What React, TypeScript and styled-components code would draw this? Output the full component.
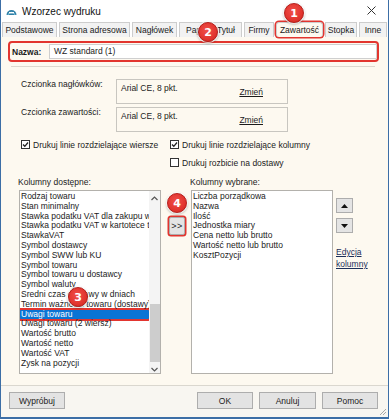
import styled, { createGlobalStyle } from "styled-components";

const GlobalStyle = createGlobalStyle`
  html, body {
    margin: 0;
    padding: 0;
    background: #ffffff;
  }
  body {
    font-family: "Liberation Sans", Arial, sans-serif;
    font-size: 8.5px;
    color: #1b1b1b;
  }
`;

const Window = styled.div`
  position: relative;
  width: 389px;
  height: 419px;
  box-sizing: border-box;
  display: flex;
  flex-direction: column;
  background: #fdf9f0;
  border-left: 1px solid #3c6ea6;
  border-right: 1px solid #3c6ea6;
  border-bottom: 2px solid #3c6ea6;
  overflow: hidden;
`;

const TitleBar = styled.div`
  height: 21px;
  flex: none;
  display: flex;
  align-items: center;
  gap: 5px;
  padding-left: 5px;
  background: #ffffff;
`;

const Title = styled.span`
  flex: 1;
  font-size: 10px;
  color: #111;
  padding-top: 1px;
`;

const CloseBox = styled.div`
  width: 28px;
  display: flex;
  justify-content: center;
  margin-right: 3px;
`;

const TabRow = styled.div`
  height: 16px;
  flex: none;
  display: flex;
  gap: 2px;
  padding-left: 1px;
  background: #ffffff;
`;

const Tab = styled.div<{ $w: number; $active?: boolean }>`
  width: ${({ $w }) => $w}px;
  box-sizing: border-box;
  height: 15px;
  margin-top: 1px;
  border: 1px solid #cdcdcd;
  border-bottom: none;
  background: ${({ $active }) => ($active ? "#fdf9f0" : "#f2f2f2")};
  line-height: 14px;
  text-align: center;
  white-space: nowrap;
  overflow: hidden;
  ${({ $active }) =>
    $active &&
    `
    border-radius: 3px;
    box-shadow: 0 0 0 1.5px #e2352f;
  `}
`;

const NameRow = styled.div`
  margin: 4px 9px 0 7px;
  height: 21px;
  box-sizing: border-box;
  border: 2px solid #e2352f;
  border-radius: 4px;
  display: flex;
  align-items: center;
  padding: 0 0 0 2px;
  gap: 4px;
`;

const NameLabel = styled.span`
  width: 33px;
  font-weight: bold;
`;

const NameInput = styled.div`
  flex: 1;
  height: 15px;
  box-sizing: border-box;
  background: #ffffff;
  border: 1px solid #cfcfcf;
  padding-left: 4px;
  line-height: 13px;
`;

const Divider = styled.div`
  height: 1px;
  margin: 4px 13px 0 10px;
  background: #dcd8cf;
`;

const FontGrid = styled.div`
  display: grid;
  grid-template-columns: 95px 172px;
  row-gap: 3px;
  margin-top: 12px;
  padding-left: 20px;
`;

const FieldLabel = styled.span`
  line-height: 11px;
`;

const FontBox = styled.div`
  height: 25px;
  box-sizing: border-box;
  border: 1px solid #c8c6c0;
  display: grid;
  grid-template-columns: 1fr auto;
  padding-left: 4px;
`;

const FontValue = styled.span`
  padding-top: 3px;
  line-height: 11px;
`;

const LinkText = styled.span`
  align-self: center;
  margin-right: 24px;
  padding-top: 1px;
  text-decoration: underline;
  color: #1b1b1b;
`;

const CheckGrid = styled.div`
  display: grid;
  grid-template-columns: 149px 1fr;
  row-gap: 9px;
  margin-top: 8px;
  padding-left: 20px;
`;

const CheckItem = styled.label<{ $col?: number }>`
  grid-column: ${({ $col }) => $col ?? "auto"};
  display: flex;
  align-items: center;
  gap: 3px;
  height: 9px;
  white-space: nowrap;
`;

const Box = styled.span`
  width: 9px;
  height: 9px;
  box-sizing: border-box;
  border: 1px solid #333;
  background: #ffffff;
  display: flex;
  align-items: center;
  justify-content: center;
`;

const ListsHeader = styled.div`
  display: grid;
  grid-template-columns: 172px 1fr;
  margin-top: 10px;
  padding-left: 17px;
  line-height: 11px;
`;

const ListsGrid = styled.div`
  display: grid;
  grid-template-columns: 142px 30px 142px auto;
  height: 184px;
  margin-top: 2px;
  padding-left: 18px;
`;

const ListBox = styled.div<{ $scroll?: boolean }>`
  box-sizing: border-box;
  border: 1px solid #b3b1ac;
  background: #ffffff;
  display: grid;
  grid-template-columns: ${({ $scroll }) => ($scroll ? "1fr 11px" : "1fr")};
  overflow: hidden;
`;

const Items = styled.div`
  padding-top: 1px;
  min-width: 0;
`;

const Item = styled.div<{ $selected?: boolean }>`
  height: 9.8px;
  line-height: 9.8px;
  padding-left: 1px;
  white-space: nowrap;
  overflow: hidden;
  ${({ $selected }) =>
    $selected &&
    `
    background: #0a74d4;
    color: #ffffff;
    border-radius: 1px;
    box-shadow: 0 0 0 2px #e2352f;
  `}
`;

const ScrollBar = styled.div`
  display: flex;
  flex-direction: column;
  align-items: center;
  background: #f4f4f4;
`;

const ScrollArrow = styled.div`
  height: 14px;
  display: flex;
  align-items: center;
  justify-content: center;
`;

const ScrollThumb = styled.div`
  width: 10px;
  height: 58px;
  margin-top: 99px;
  background: #cdcdcd;
`;

const MidColumn = styled.div`
  padding: 27px 0 0 8px;
`;

const MoveButton = styled.div`
  width: 16px;
  height: 18px;
  box-sizing: border-box;
  border: 1px solid #adadad;
  background: #e4e4e4;
  border-radius: 2px;
  box-shadow: 0 0 0 1.5px #e2352f;
  display: flex;
  align-items: center;
  justify-content: center;
  font-size: 9px;
  letter-spacing: 0.5px;
`;

const SideColumn = styled.div`
  display: flex;
  flex-direction: column;
  align-items: flex-start;
  gap: 5px;
  padding: 8px 0 0 3px;
`;

const OrderButton = styled.div`
  width: 17px;
  height: 15px;
  box-sizing: border-box;
  border: 1px solid #adadad;
  background: #e4e4e4;
  display: flex;
  align-items: center;
  justify-content: center;
`;

const EditLink = styled.span`
  margin-top: 8px;
  line-height: 12px;
  text-decoration: underline;
  color: #1c2f5a;
`;

const Body = styled.div`
  flex: 1;
`;

const Footer = styled.div`
  position: relative;
  height: 32px;
  flex: none;
  box-sizing: border-box;
  border-top: 1px solid #dad7cf;
  background: #f8f6f1;
  display: flex;
  align-items: flex-start;
  padding: 6px 10px 0 8px;
`;

const ButtonGroup = styled.div`
  margin-left: auto;
  display: flex;
  gap: 6px;
`;

const DialogButton = styled.div<{ $w: number }>`
  width: ${({ $w }) => $w}px;
  height: 17px;
  box-sizing: border-box;
  border: 1px solid #adadad;
  background: #e3e3e3;
  display: flex;
  align-items: center;
  justify-content: center;
`;

const Grip = styled.svg`
  position: absolute;
  right: 1px;
  bottom: 1px;
`;

const Badge = styled.div<{ $x: number; $y: number }>`
  position: absolute;
  left: ${({ $x }) => $x}px;
  top: ${({ $y }) => $y}px;
  width: 20px;
  height: 20px;
  box-sizing: border-box;
  border-radius: 50%;
  border: 1px solid #b51d19;
  background: radial-gradient(circle at 45% 40%, #f0504a 0%, #e2352f 60%, #c92520 100%);
  box-shadow: 0 0 0 1px rgba(255, 255, 255, 0.7), 0 1px 3px rgba(0, 0, 0, 0.45);
  color: #ffffff;
  font-family: "DejaVu Sans", "Liberation Sans", sans-serif;
  font-weight: bold;
  font-size: 11px;
  display: flex;
  align-items: center;
  justify-content: center;
`;

const tabs = [
  { label: "Podstawowe", w: 55 },
  { label: "Strona adresowa", w: 71 },
  { label: "Nagłówek", w: 45 },
  { label: "Papier i Tytuł", w: 63 },
  { label: "Firmy", w: 30 },
  { label: "Zawartość", w: 47, active: true },
  { label: "Stopka", w: 32 },
  { label: "Inne", w: 28 },
];

const available = [
  "Rodzaj towaru",
  "Stan minimalny",
  "Stawka podatku VAT dla zakupu w",
  "Stawka podatku VAT w kartotece t",
  "StawkaVAT",
  "Symbol dostawcy",
  "Symbol SWW lub KU",
  "Symbol towaru",
  "Symbol towaru u dostawcy",
  "Symbol waluty",
  "Średni czas dostawy w dniach",
  "Termin ważności towaru (dostawy)",
  "Uwagi towaru",
  "Uwagi towaru (2 wiersz)",
  "Wartość brutto",
  "Wartość netto",
  "Wartość VAT",
  "Zysk na pozycji",
];

const chosen = [
  "Liczba porządkowa",
  "Nazwa",
  "Ilość",
  "Jednostka miary",
  "Cena netto lub brutto",
  "Wartość netto lub brutto",
  "KosztPozycji",
];

function CheckMark() {
  return (
    <svg width="7" height="7" viewBox="0 0 7 7">
      <path d="M1 3.5 L2.8 5.3 L6 1.5" fill="none" stroke="#222" strokeWidth="1.3" />
    </svg>
  );
}

function Check({ checked, label, col }: { checked?: boolean; label: string; col?: number }) {
  return (
    <CheckItem $col={col}>
      <Box>{checked && <CheckMark />}</Box>
      {label}
    </CheckItem>
  );
}

function AppIcon() {
  return (
    <svg width="11" height="10" viewBox="0 0 11 10">
      <path d="M0.5 9 A5 5 0 0 1 10.5 9 Z" fill="#2f7fa6" />
      <path d="M2 9 A3.6 3.6 0 0 1 9 9" fill="none" stroke="#7cc3df" strokeWidth="1" />
      <rect x="3" y="6" width="5" height="1.4" fill="#ffffff" />
    </svg>
  );
}

export default function App() {
  return (
    <>
      <GlobalStyle />
      <Window>
        <TitleBar>
          <AppIcon />
          <Title>Wzorzec wydruku</Title>
          <CloseBox>
            <svg width="9" height="9" viewBox="0 0 9 9">
              <path d="M0.5 0.5 L8.5 8.5 M8.5 0.5 L0.5 8.5" stroke="#333" strokeWidth="1" />
            </svg>
          </CloseBox>
        </TitleBar>

        <TabRow>
          {tabs.map((t) => (
            <Tab key={t.label} $w={t.w} $active={t.active}>
              {t.label}
            </Tab>
          ))}
        </TabRow>

        <Body>
          <NameRow>
            <NameLabel>Nazwa:</NameLabel>
            <NameInput>WZ standard (1)</NameInput>
          </NameRow>
          <Divider />

          <FontGrid>
            <FieldLabel>Czcionka nagłówków:</FieldLabel>
            <FontBox>
              <FontValue>Arial CE, 8 pkt.</FontValue>
              <LinkText>Zmień</LinkText>
            </FontBox>
            <FieldLabel>Czcionka zawartości:</FieldLabel>
            <FontBox>
              <FontValue>Arial CE, 8 pkt.</FontValue>
              <LinkText>Zmień</LinkText>
            </FontBox>
          </FontGrid>

          <CheckGrid>
            <Check checked label="Drukuj linie rozdzielające wiersze" />
            <Check checked label="Drukuj linie rozdzielające kolumny" />
            <Check label="Drukuj rozbicie na dostawy" col={2} />
          </CheckGrid>

          <ListsHeader>
            <span>Kolumny dostępne:</span>
            <span>Kolumny wybrane:</span>
          </ListsHeader>

          <ListsGrid>
            <ListBox $scroll>
              <Items>
                {available.map((name) => (
                  <Item key={name} $selected={name === "Uwagi towaru"}>
                    {name}
                  </Item>
                ))}
              </Items>
              <ScrollBar>
                <ScrollArrow>
                  <svg width="7" height="5" viewBox="0 0 7 5">
                    <path d="M0.5 4 L3.5 1 L6.5 4" fill="none" stroke="#555" strokeWidth="1.2" />
                  </svg>
                </ScrollArrow>
                <ScrollThumb />
                <ScrollArrow>
                  <svg width="7" height="5" viewBox="0 0 7 5">
                    <path d="M0.5 1 L3.5 4 L6.5 1" fill="none" stroke="#555" strokeWidth="1.2" />
                  </svg>
                </ScrollArrow>
              </ScrollBar>
            </ListBox>

            <MidColumn>
              <MoveButton>&gt;&gt;</MoveButton>
            </MidColumn>

            <ListBox>
              <Items>
                {chosen.map((name) => (
                  <Item key={name}>{name}</Item>
                ))}
              </Items>
            </ListBox>

            <SideColumn>
              <OrderButton>
                <svg width="7" height="4" viewBox="0 0 7 4">
                  <path d="M0 4 L3.5 0 L7 4 Z" fill="#111" />
                </svg>
              </OrderButton>
              <OrderButton>
                <svg width="7" height="4" viewBox="0 0 7 4">
                  <path d="M0 0 L7 0 L3.5 4 Z" fill="#111" />
                </svg>
              </OrderButton>
              <EditLink>
                Edycja
                <br />
                kolumny
              </EditLink>
            </SideColumn>
          </ListsGrid>
        </Body>

        <Footer>
          <DialogButton $w={56}>Wypróbuj</DialogButton>
          <ButtonGroup>
            <DialogButton $w={56}>OK</DialogButton>
            <DialogButton $w={57}>Anuluj</DialogButton>
            <DialogButton $w={56}>Pomoc</DialogButton>
          </ButtonGroup>
          <Grip width="8" height="8" viewBox="0 0 8 8">
            <path d="M7 1 L1 7 M7 4 L4 7 M7 7 L7 7" stroke="#a8a8a8" strokeWidth="1" />
          </Grip>
        </Footer>

        <Badge $x={283} $y={3}>1</Badge>
        <Badge $x={197} $y={22}>2</Badge>
        <Badge $x={67} $y={287}>3</Badge>
        <Badge $x={166} $y={193}>4</Badge>
      </Window>
    </>
  );
}
